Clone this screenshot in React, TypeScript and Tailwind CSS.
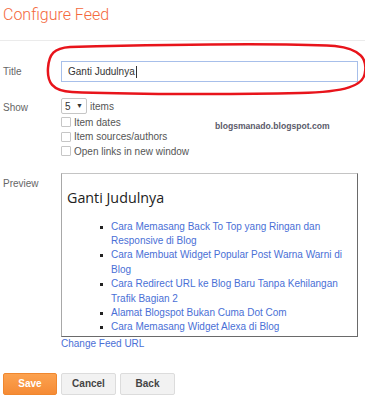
import React from "react";

const links = [
  "Cara Memasang Back To Top yang Ringan dan Responsive di Blog",
  "Cara Membuat Widget Popular Post Warna Warni di Blog",
  "Cara Redirect URL ke Blog Baru Tanpa Kehilangan Trafik Bagian 2",
  "Alamat Blogspot Bukan Cuma Dot Com",
  "Cara Memasang Widget Alexa di Blog",
];

const options = ["Item dates", "Item sources/authors", "Open links in new window"];

function Checkbox({ label }: { label: string }) {
  return (
    <div className="flex h-[14.5px] items-center gap-[3px] whitespace-nowrap">
      <span className="h-[10px] w-[10px] shrink-0 rounded-[1px] border border-[#c6c6c6] bg-white" />
      <span>{label}</span>
    </div>
  );
}

export default function App() {
  return (
    <div
      className="relative h-[400px] w-[365px] overflow-hidden bg-white text-[10px] text-[#555]"
      style={{ fontFamily: '"Liberation Sans", Arial, sans-serif' }}
    >
      <h1
        className="px-[3px] pt-[4px] text-[16px] font-light leading-[22px] text-[#f4683c]"
        style={{ fontFamily: "Roboto, sans-serif" }}
      >
        Configure Feed
      </h1>
      <div className="mt-[14px] h-px bg-[#ebebeb]" />

      {/* Title */}
      <div className="mt-[20px] flex items-center">
        <span className="w-[61px] pl-[3px] text-[#666]">Title</span>
        <div className="flex h-[21px] w-[297px] items-center border border-[#a7bfea] px-[6px] text-[#333]">
          Ganti Judulnya<span className="ml-px h-[12px] w-px bg-[#333]" />
        </div>
      </div>

      {/* Show */}
      <div className="mt-[16px] flex">
        <span className="w-[61px] pl-[3px] pt-[2px] text-[#666]">Show</span>
        <div className="flex flex-col">
          <div className="flex items-center gap-[3px]">
            <div className="flex h-[16px] w-[26px] items-center justify-between rounded-[2px] border border-[#c6c6c6] px-[3px] text-[#333]">
              <span>5</span>
              <span className="text-[7px]">▼</span>
            </div>
            <span>items</span>
          </div>
          <div className="mt-[1px] flex items-start">
            <div className="flex w-[154px] shrink-0 flex-col">
              {options.map((o) => (
                <Checkbox key={o} label={o} />
              ))}
            </div>
            <span className="mt-[5px] whitespace-nowrap text-[8.6px] font-bold text-[#5a5a6a]">
              blogsmanado.blogspot.com
            </span>
          </div>
        </div>
      </div>

      {/* Preview */}
      <div className="mt-[14px] flex">
        <span className="w-[61px] pl-[3px] pt-[3px] text-[#666]">Preview</span>
        <div>
          <div className="h-[164px] w-[297px] border border-t-[#c4c4c4] border-l-[#a8a8a8] border-r-[#6a6a6a] border-b-[#6a6a6a] bg-white">
            <div
              className="ml-[5px] mt-[14px] text-[14.3px] leading-[19px] text-[#222]"
              style={{ fontFamily: '"Open Sans", sans-serif' }}
            >
              Ganti Judulnya
            </div>
            <ul className="mt-[13px] pl-[49px] pr-[12px]">
              {links.map((l) => (
                <li key={l} className="relative leading-[14.4px] text-[#4a6fd6]">
                  <span className="absolute left-[-11px] top-[6px] h-[3px] w-[3px] bg-[#222]" />
                  {l}
                </li>
              ))}
            </ul>
          </div>
          <div className="mt-[1px] leading-[12px] text-[#4a6fd6]">Change Feed URL</div>
        </div>
      </div>

      {/* Buttons */}
      <div className="mt-[23px] flex gap-[4px] pl-[3px] font-bold">
        <button className="h-[22px] w-[54px] rounded-[2px] border border-[#f0872e] bg-gradient-to-b from-[#fca24f] to-[#f58b35] text-white">
          Save
        </button>
        <button className="h-[22px] w-[55px] rounded-[2px] border border-[#dcdcdc] bg-[#f2f2f2] text-[#444]">
          Cancel
        </button>
        <button className="h-[22px] w-[55px] rounded-[2px] border border-[#dcdcdc] bg-[#f2f2f2] text-[#444]">
          Back
        </button>
      </div>

      {/* red annotation ring */}
      <svg className="pointer-events-none absolute left-0 top-0" width="365" height="100" viewBox="0 0 365 100">
        <path
          d="M70 47 C150 45 280 43 335 46 C362 49 367 60 365 72 C364 86 345 92 300 93 C220 95 120 94 72 92 C52 91 47 82 48 68 C49 54 54 48 70 47 Z"
          fill="none"
          stroke="#e8141b"
          strokeWidth="2.5"
        />
      </svg>
    </div>
  );
}
